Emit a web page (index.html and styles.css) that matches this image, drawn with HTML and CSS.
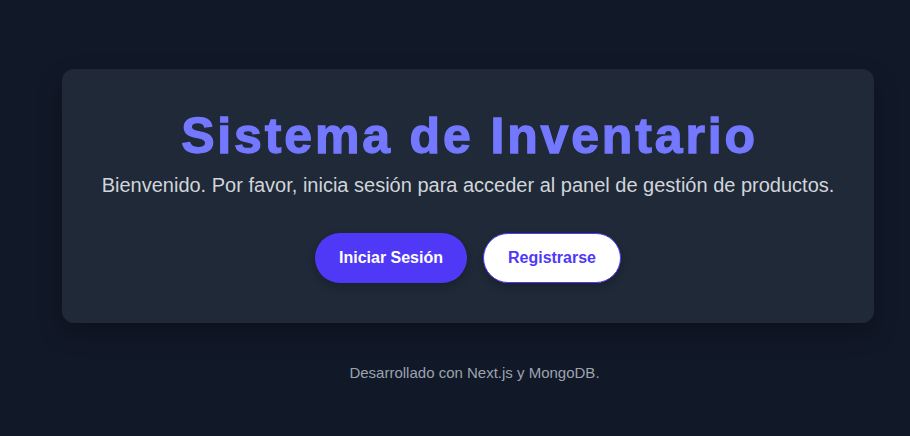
FILE: index.html
```html
<!DOCTYPE html>
<html lang="es">
<head>
<meta charset="utf-8">
<title>Sistema de Inventario</title>
<link rel="stylesheet" href="styles.css">
</head>
<body>
<main class="page">
  <section class="card">
    <h1 class="title">Sistema de Inventario</h1>
    <p class="subtitle">Bienvenido. Por favor, inicia sesión para acceder al panel de gestión de productos.</p>
    <div class="actions">
      <a class="btn btn-primary" href="#">Iniciar Sesión</a>
      <a class="btn btn-outline" href="#">Registrarse</a>
    </div>
  </section>
  <footer class="footer">Desarrollado con Next.js y MongoDB.</footer>
</main>
</body>
</html>
```
FILE: styles.css
```css
html, body {
  margin: 0;
  padding: 0;
  background: #111827;
  font-family: "Liberation Sans", Arial, sans-serif;
}
.page {
  display: flex;
  flex-direction: column;
  align-items: stretch;
  padding: 69px 36px 0 62px;
  box-sizing: border-box;
  min-height: 436px;
}
.card {
  background: #1f2937;
  border-radius: 12px;
  height: 254px;
  box-sizing: border-box;
  padding-top: 38px;
  display: flex;
  flex-direction: column;
  align-items: center;
  box-shadow: 0 10px 25px rgba(0, 0, 0, 0.25);
}
.title {
  margin: 0;
  padding-left: 3px;
  font-size: 50px;
  font-weight: 900;
  line-height: 58px;
  letter-spacing: 2.85px;
  color: #7378ff;
  -webkit-text-stroke: 1.3px #7378ff;
}
.subtitle {
  margin: 6px 0 0;
  font-size: 20px;
  line-height: 28px;
  color: #d1d5db;
}
.actions {
  display: flex;
  gap: 16px;
  margin-top: 34px;
}
.btn {
  display: flex;
  align-items: center;
  justify-content: center;
  height: 50px;
  box-sizing: border-box;
  border-radius: 25px;
  font-size: 16px;
  font-weight: 700;
  text-decoration: none;
}
.btn-primary {
  width: 152px;
  background: #4f39f6;
  color: #ffffff;
  box-shadow: 0 4px 8px rgba(0, 0, 0, 0.2);
}
.btn-outline {
  width: 138px;
  background: #ffffff;
  color: #4f39f6;
  border: 1px solid #4f39f6;
  box-shadow: 0 4px 8px rgba(0, 0, 0, 0.2);
}
.footer {
  margin-top: 40px;
  text-align: center;
  padding-left: 13px;
  font-size: 15px;
  line-height: 20px;
  color: #9ca3af;
}
```
